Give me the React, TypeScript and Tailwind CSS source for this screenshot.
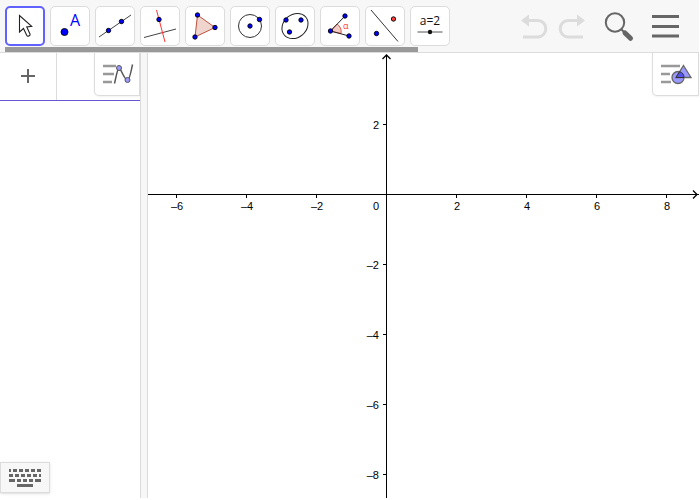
import type { ReactNode } from 'react';

const BLUE = '#0000ff';
const UNIT = 70;
const ORIGIN_X = 238;
const ORIGIN_Y = 141;

function Dot({ x, y, r = 2.2, fill = BLUE }: { x: number; y: number; r?: number; fill?: string }) {
    return <circle cx={x} cy={y} r={r} fill={fill} stroke="#000" strokeWidth="0.9" />;
}

const tools: { name: string; icon: ReactNode }[] = [
    {
        name: 'Move',
        icon: (
            <path
                d="M14.5 9.5v16.5l4-3.500 3.300 7c.8 1.300 3.700.2 3.300-1.300l-3.300-7.200 4.900-.6z"
                fill="#fff"
                stroke="#222"
                strokeWidth="1.1"
            />
        ),
    },
    {
        name: 'Point',
        icon: (
            <>
                <Dot x={14.5} y={26} r={3.5} />
                <text x="20" y="20" fontSize="16" fill={BLUE} className="font-['Open_Sans',sans-serif]">
                    A
                </text>
            </>
        ),
    },
    {
        name: 'Line',
        icon: (
            <>
                <path d="M4 31 36 9" stroke="#444" />
                <Dot x={13.5} y={24.5} />
                <Dot x={26.5} y={15.5} />
            </>
        ),
    },
    {
        name: 'Perpendicular Line',
        icon: (
            <>
                <path d="M4 31.5 36 23" stroke="#444" />
                <path d="M16.5 4 25 36" stroke="#ff3333" />
                <Dot x={19} y={13.5} />
            </>
        ),
    },
    {
        name: 'Polygon',
        icon: (
            <>
                <path d="M12.5 9 30 21.5 10 31z" fill="#efd5cd" stroke="#c0503c" />
                <Dot x={12.5} y={9} />
                <Dot x={30} y={21.5} />
                <Dot x={10} y={31} />
            </>
        ),
    },
    {
        name: 'Circle with Center',
        icon: (
            <>
                <circle cx="20" cy="20" r="11.5" fill="none" stroke="#333" />
                <Dot x={20} y={20} />
                <Dot x={29.5} y={13.5} />
            </>
        ),
    },
    {
        name: 'Ellipse',
        icon: (
            <>
                <ellipse cx="20" cy="20" rx="14" ry="11.5" fill="none" stroke="#222" transform="rotate(-40 20 20)" />
                <Dot x={11} y={14} />
                <Dot x={26} y={14} />
                <Dot x={14.5} y={26} />
            </>
        ),
    },
    {
        name: 'Angle',
        icon: (
            <>
                <path d="M10.5 25 17 18Q22 21.5 21 27.5z" fill="#f2cdc7" stroke="#e05545" />
                <path d="M25 10 10.5 25 29 30" fill="none" stroke="#222" />
                <Dot x={25} y={10} />
                <Dot x={10.5} y={25} />
                <Dot x={29} y={30} />
                <text x="23" y="23" fontSize="9" fill="#ff3333" className="font-['Open_Sans',sans-serif]">
                    α
                </text>
            </>
        ),
    },
    {
        name: 'Reflect about Line',
        icon: (
            <>
                <path d="M6 4 33 35.5" stroke="#333" />
                <Dot x={28.5} y={13} fill="#ff3b3b" />
                <Dot x={11.5} y={27.5} />
            </>
        ),
    },
    {
        name: 'Slider',
        icon: (
            <>
                <text x="20" y="19" fontSize="12" fill="#111" textAnchor="middle" className="font-['Open_Sans',sans-serif]">
                    a=2
                </text>
                <path d="M7.500 26h25" stroke="#555" />
                <circle cx="20" cy="26" r="2.200" fill="#111" />
            </>
        ),
    },
];

function Toolbar() {
    return (
        <header className="relative flex items-start justify-between h-[53px] bg-[#f7f7f7] border-b border-[#dcdcdc]">
            <div className="flex gap-[5px] pl-[5px] pt-[6px]">
                {tools.map((tool, i) => (
                    <button
                        key={tool.name}
                        aria-label={tool.name}
                        className={
                            i === 0
                                ? 'size-10 shrink-0 rounded-[5px] border-2 border-[#6161ff] bg-white'
                                : 'size-10 shrink-0 rounded-[5px] border border-[#dcdcdc] bg-white'
                        }
                    >
                        <svg viewBox="0 0 40 40" className={i === 0 ? 'size-10 -m-0.5' : 'size-10 -m-px'}>
                            {tool.icon}
                        </svg>
                    </button>
                ))}
            </div>

            {/* Scroll thumb under the tools */}
            <div className="absolute bottom-0 left-[5px] w-[413px] h-[5px] bg-[#999999]" />

            <div className="flex items-center h-[52px] pr-5">
                <button aria-label="Undo" className="mr-2">
                    <svg width="30" height="26" viewBox="0 0 30 26">
                        <path d="M8 7.500h11a7.800 8.200 0 0 1 0 16.400H4" fill="none" stroke="#dcdcdc" strokeWidth="3" />
                        <path d="M2 7.500 10 1.500v12z" fill="#dcdcdc" />
                    </svg>
                </button>
                <button aria-label="Redo" className="mr-4">
                    <svg width="30" height="26" viewBox="0 0 30 26">
                        <path d="M22 7.500H11a7.800 8.200 0 0 0 0 16.400h15" fill="none" stroke="#dcdcdc" strokeWidth="3" />
                        <path d="M28 7.500 20 1.500v12z" fill="#dcdcdc" />
                    </svg>
                </button>
                <button aria-label="Search" className="mr-[17px]">
                    <svg width="32" height="32" viewBox="0 0 32 32">
                        <circle cx="12" cy="12.500" r="9.200" fill="none" stroke="#666" strokeWidth="2" />
                        <path d="M18 19 22 23" stroke="#666" strokeWidth="2" />
                        <path d="M22 23 27.500 28.300" stroke="#666" strokeWidth="5" strokeLinecap="round" />
                    </svg>
                </button>
                <button aria-label="Menu">
                    <svg width="27" height="26" viewBox="0 0 27 26">
                        <path d="M0 3.500h27M0 13.500h27M0 23h27" stroke="#666" strokeWidth="3" />
                    </svg>
                </button>
            </div>
        </header>
    );
}

function AlgebraView() {
    return (
        <aside className="flex flex-col justify-between w-[140px] shrink-0">
            <div className="relative flex h-12 border-b border-[#6557d2]">
                <button aria-label="Add expression" className="flex items-center justify-center w-[57px] pb-px border-r border-[#dcdcdc]">
                    <svg width="14" height="14" viewBox="0 0 14 14">
                        <path d="M7 0v14M0 7h14" stroke="#666" strokeWidth="2" />
                    </svg>
                </button>
                <input aria-label="Expression" className="w-0 flex-1 outline-none" />
                <button
                    aria-label="Algebra style bar"
                    className="absolute top-0 right-0 w-[46px] h-[43px] bg-white border border-t-0 border-[#dcdcdc] rounded-bl-[5px] shadow-xs"
                >
                    <svg width="44" height="42" viewBox="0 0 44 42">
                        <path d="M8 13h13M8 21h11M8 29h9" stroke="#999" strokeWidth="2.500" />
                        <path d="M19.500 30.500c1.500-6 3-15.500 4.500-15.500 2 0 5 12 8.500 12 2 0 3.500-8 5-15.500" fill="none" stroke="#555" strokeWidth="1.500" />
                        <circle cx="24" cy="15" r="2.500" fill="#9999ff" stroke="#555" />
                        <circle cx="32.500" cy="27" r="2.500" fill="#9999ff" stroke="#555" />
                    </svg>
                </button>
            </div>
            <button
                aria-label="Show keyboard"
                className="flex items-center justify-center w-[50px] h-[31px] mb-[7px] bg-[#f7f7f7] border border-[#dcdcdc] shadow-sm"
            >
                <svg width="32" height="19" viewBox="0 0 32 19" fill="none" stroke="#666" strokeWidth="3">
                    <path d="M0 2.500h2M4 2.500h4M10 2.500h4M16 2.500h4M22 2.500h4M28 2.500h4" />
                    <path d="M0 7.500h4M6 7.500h4M12 7.500h4M18 7.500h4M24 7.500h4M30 7.500h2" />
                    <path d="M0 12.500h6M8 12.500h4M14 12.500h4M20 12.500h4M26 12.500h6" />
                    <path d="M8 17.500h16" />
                </svg>
            </button>
        </aside>
    );
}

const label = (n: number) => (n < 0 ? `–${-n}` : `${n}`);

function GraphicsView() {
    return (
        <main className="relative flex-1 min-w-0 mb-0.5">
            <svg className="absolute inset-0 size-full text-[11px] font-['Liberation_Sans',sans-serif]" shapeRendering="crispEdges">
                <g stroke="#000">
                    <line x1="0" y1={ORIGIN_Y + 0.5} x2="100%" y2={ORIGIN_Y + 0.5} />
                    <line x1={ORIGIN_X + 0.5} y1="2" x2={ORIGIN_X + 0.5} y2="100%" />
                </g>
                <path d="M234.500 6 238.500 2 242.500 6" fill="none" stroke="#000" strokeWidth="1.300" shapeRendering="geometricPrecision" />
                <svg x="100%" overflow="visible">
                    <path d="M-6 137.500-2 141.500-6 145.500" fill="none" stroke="#000" strokeWidth="1.300" shapeRendering="geometricPrecision" />
                </svg>

                {/* Horizontal axis */}
                {[-6, -4, -2, 2, 4, 6, 8].map((n) => {
                    const x = ORIGIN_X + (n / 2) * UNIT;
                    return (
                        <g key={n}>
                            <path d={`M${x + 0.5} ${ORIGIN_Y}v4`} stroke="#000" />
                            <text x={x + 1} y={ORIGIN_Y + 16} textAnchor="middle">
                                {label(n)}
                            </text>
                        </g>
                    );
                })}

                {/* Vertical axis */}
                {[2, -2, -4, -6, -8].map((n) => {
                    const y = ORIGIN_Y - (n / 2) * UNIT;
                    return (
                        <g key={n}>
                            <path d={`M${ORIGIN_X - 3} ${y + 0.5}h3`} stroke="#000" />
                            <text x={ORIGIN_X - 7} y={y + 5} textAnchor="end">
                                {label(n)}
                            </text>
                        </g>
                    );
                })}
                <text x={ORIGIN_X - 7} y={ORIGIN_Y + 16} textAnchor="end">
                    0
                </text>
            </svg>
            <button
                aria-label="Graphics style bar"
                className="absolute top-0 right-0 w-[47px] h-[43px] bg-white border border-t-0 border-[#dcdcdc] rounded-bl-[5px] shadow-xs"
            >
                <svg width="45" height="42" viewBox="0 0 45 42">
                    <path d="M8 13h19M8 21h9M8 29h10" stroke="#999" strokeWidth="2.500" />
                    <circle cx="25" cy="24.500" r="7.500" fill="#fff" />
                    <circle cx="25" cy="24.500" r="6" fill="#9999ff" stroke="#666" strokeWidth="1.300" />
                    <path d="M30.500 12.500 38 24.500H23z" fill="#9999ff" stroke="#666" strokeWidth="1.300" />
                    <path d="M23 24.500 26.600 18.700A6 6 0 0 1 31 24.500z" fill="#5555ee" stroke="#333" />
                </svg>
            </button>
        </main>
    );
}

export default function App() {
    return (
        <div className="flex flex-col min-h-screen bg-white pr-px">
            <Toolbar />
            <div className="flex flex-1">
                <AlgebraView />
                <div className="w-2 shrink-0 mb-0.5 bg-[#f7f7f7] border-x border-[#dcdcdc]" />
                <GraphicsView />
            </div>
        </div>
    );
}
